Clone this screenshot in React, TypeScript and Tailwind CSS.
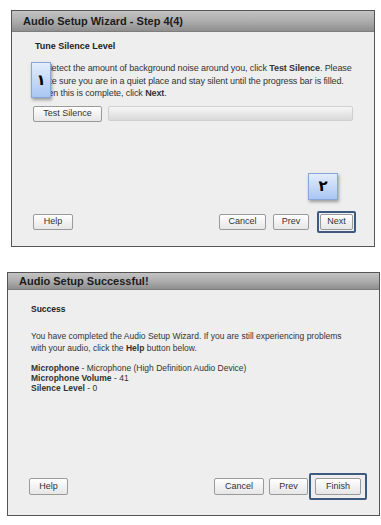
import type { ReactNode } from 'react';

const font = { fontFamily: '"Liberation Sans", Arial, sans-serif' };

function Btn({ children, className = '' }: { children: ReactNode; className?: string }) {
    return (
        <div
            className={`flex items-center justify-center h-[16px] rounded-[2px] border border-[#9a9a9a] bg-gradient-to-b from-[#ffffff] to-[#e6e6e6] text-[9px] text-[#333] ${className}`}
        >
            {children}
        </div>
    );
}

function Badge({ children, className = '' }: { children: ReactNode; className?: string }) {
    return (
        <div
            className={`absolute flex items-center justify-center border border-[#8aa6d6] bg-gradient-to-b from-[#e3edfc] to-[#a9c6f2] shadow-[1px_2px_3px_rgba(0,0,0,0.35)] text-[15px] font-bold text-black ${className}`}
            style={{ fontFamily: '"DejaVu Sans", sans-serif' }}
        >
            {children}
        </div>
    );
}

function TitleBar({ title, className = '' }: { title: string; className?: string }) {
    return (
        <div
            className={`flex items-center border-b border-[#7d7d7d] bg-gradient-to-b from-[#c4c4c4] via-[#adadad] to-[#8f8f8f] text-[11px] font-bold text-[#1b1b1b] ${className}`}
        >
            {title}
        </div>
    );
}

export default function App() {
    return (
        <div className="w-[381px] h-[525px] bg-white overflow-hidden" style={font}>
            {/* step 4 dialog */}
            <div className="relative ml-[11px] mt-[10px] w-[364px] h-[237px] flex flex-col border-[1.5px] border-[#555] bg-[#eeeeee]">
                <TitleBar title="Audio Setup Wizard - Step 4(4)" className="h-[21px] pl-[11px]" />
                <div className="flex-1 flex flex-col px-[21px] pt-[8px]">
                    <div className="pl-[2px] text-[9px] font-bold text-[#222] leading-[12px]">Tune Silence Level</div>
                    <p className="pl-[2px] mt-[10px] text-[9px] leading-[12.5px] text-[#333] tracking-[-0.1px]">
                        To detect the amount of background noise around you, click <b>Test Silence</b>. Please make sure you
                        are in a quiet place and stay silent until the progress bar is filled. When this is complete, click{' '}
                        <b>Next</b>.
                    </p>
                    <div className="mt-[6px] flex gap-[6px] items-center">
                        <Btn className="w-[69px] h-[15px]">Test Silence</Btn>
                        <div className="flex-1 h-[15px] rounded-[2px] border border-[#cfcfcf] bg-gradient-to-b from-[#f6f6f6] to-[#d9d9d9]" />
                    </div>
                    <div className="mt-auto mb-[13px] flex items-center">
                        <Btn className="w-[40px]">Help</Btn>
                        <Btn className="w-[47px] ml-auto">Cancel</Btn>
                        <Btn className="w-[36px] ml-[7px]">Prev</Btn>
                        <div className="ml-[8px] mr-[-3px] p-[1px] rounded-[2px] border-[2.5px] border-[#3e5a7e]">
                            <Btn className="w-[33px]">Next</Btn>
                        </div>
                    </div>
                </div>
                <Badge className="left-[19px] top-[51px] w-[20px] h-[36px]">١</Badge>
                <Badge className="left-[296px] top-[162px] w-[30px] h-[27px]">٢</Badge>
            </div>

            {/* success dialog */}
            <div className="ml-[7px] mt-[25px] w-[373px] h-[244px] flex flex-col border-[1.5px] border-[#555] bg-[#eeeeee]">
                <TitleBar title="Audio Setup Successful!" className="h-[17px] pl-[11px]" />
                <div className="flex-1 flex flex-col px-[21px] pt-[13px]">
                    <div className="pl-[2px] text-[8.5px] font-bold text-[#222] leading-[12px]">Success</div>
                    <p className="pl-[2px] mt-[16px] text-[8.5px] leading-[11.5px] text-[#333]">
                        You have completed the Audio Setup Wizard. If you are still experiencing problems with your audio,
                        click the <b>Help</b> button below.
                    </p>
                    <div className="pl-[2px] mt-[9px] text-[8.5px] leading-[10px] text-[#333]">
                        <div>
                            <b>Microphone</b> - Microphone (High Definition Audio Device)
                        </div>
                        <div>
                            <b>Microphone Volume</b> - 41
                        </div>
                        <div>
                            <b>Silence Level</b> - 0
                        </div>
                    </div>
                    <div className="mt-auto mb-[15px] flex items-center">
                        <Btn className="w-[39px] h-[17px]">Help</Btn>
                        <Btn className="w-[50px] h-[17px] ml-auto">Cancel</Btn>
                        <Btn className="w-[39px] h-[17px] ml-[5px]">Prev</Btn>
                        <div className="ml-[1px] mr-[-9px] px-[4px] py-[3px] rounded-[2px] border-[2.5px] border-[#3e5a7e]">
                            <Btn className="w-[46px] h-[17px]">Finish</Btn>
                        </div>
                    </div>
                </div>
            </div>
        </div>
    );
}
